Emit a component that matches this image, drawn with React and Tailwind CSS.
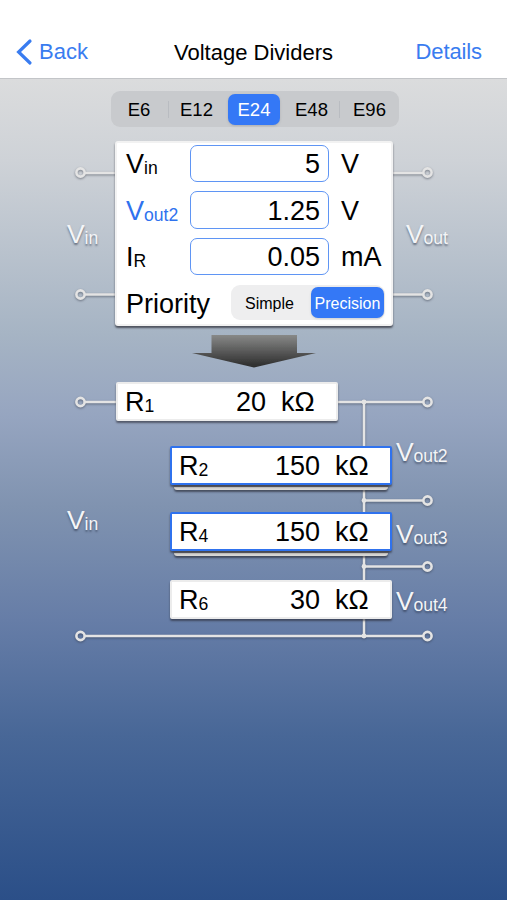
import clsx from "clsx";

const SERIES = [
  { label: "E6", className: "pr-[3px]", divider: true },
  { label: "E12", className: "pr-[4px]" },
  { label: "E24", className: "rounded-[7px] bg-[#3478f6] text-white shadow-sm" },
  { label: "E48", className: "pl-[4px]", divider: true },
  { label: "E96", className: "pl-[2px]" },
];

const INPUTS = [
  { name: "V", sub: "in", value: "5", unit: "V" },
  { name: "V", sub: "out2", value: "1.25", unit: "V", active: true },
  { name: "I", sub: "R", value: "0.05", unit: "mA" },
];

function Symbol({ name, sub, className }) {
  return (
    <span className={clsx("whitespace-nowrap", className)}>
      {name}
      <span className="relative top-px text-[17.6px]">{sub}</span>
    </span>
  );
}

function CanvasLabel({ name, sub, className }) {
  return (
    <Symbol
      name={name}
      sub={sub}
      className={clsx(
        "text-[26.5px] leading-[30px] tracking-[-0.1px] text-[#f4f5f7] [text-shadow:0_2px_2px_rgba(40,50,70,0.55)]",
        className
      )}
    />
  );
}

function Wires() {
  const dots = [
    [80.5, 172.5], [427.5, 172.5],
    [80.5, 294.5], [427.5, 294.5],
    [80.5, 402], [427.5, 402],
    [427.5, 500.5], [427.5, 566.5],
    [80.5, 636], [427.5, 636],
  ];
  return (
    <svg
      viewBox="0 79 507 821"
      className="absolute inset-0 h-[821px] w-[507px] drop-shadow-[0_1.5px_1px_rgba(40,45,60,0.5)]"
      fill="none"
      stroke="#e4e4e4"
      strokeWidth="2.5"
    >
      <path d="M85 173H117M392 173H423M85 294.5H117M392 294.5H423" />
      <path d="M85 402H117M337 402H423M364 400V638M364 500.5H423M364 566.5H423M85 636H423" />
      {dots.map(([x, y]) => (
        <circle key={`${x}-${y}`} cx={x} cy={y} r="4.1" strokeWidth="2.6" />
      ))}
      <g fill="#e4e4e4" stroke="none">
        <circle cx="364" cy="402" r="2.4" />
        <circle cx="364" cy="500.5" r="2.4" />
        <circle cx="364" cy="566.5" r="2.4" />
        <circle cx="364" cy="636" r="2.4" />
      </g>
    </svg>
  );
}

function Resistor({ sub, value, selected }) {
  return (
    <div className="relative h-[39px] w-[222px] shrink-0">
      {selected && (
        <div className="absolute inset-x-[4px] top-[36px] h-[8px] rounded-b-[3px] border-b-[3px] border-[#d9d8d6] bg-[#77767a] shadow-[0_2px_2px_rgba(30,30,40,0.6)]" />
      )}
      <div
        className={clsx(
          "relative flex h-full items-center rounded-[2px] border-2 bg-white pl-[7px] pt-[2px] text-[27px] leading-none text-black shadow-[0_2px_2px_rgba(40,40,50,0.6)]",
          selected ? "border-[#2f72ee]" : "border-[#ececec]"
        )}
      >
        <Symbol name="R" sub={sub} className="w-[53px]" />
        <span className="w-[88px] text-right">{value}</span>
        <span className="ml-[15px]">kΩ</span>
      </div>
    </div>
  );
}

function App() {
  return (
    <div className="flex h-[900px] w-[507px] flex-col overflow-hidden bg-white font-['Liberation_Sans',Arial,sans-serif] text-black">
      <header className="grid h-[79px] shrink-0 grid-cols-[1fr_auto_1fr] items-center border-b border-[#c3c5c8] px-[16px] pt-[26px] text-[22px] leading-[26px]">
        <button className="flex items-center text-[#397cf0]">
          <svg width="17" height="28" viewBox="0 0 17 28" fill="none" stroke="#397cf0" strokeWidth="3.2" strokeLinecap="round">
            <path d="M14 3L2.6 14L14 25" />
          </svg>
          <span className="ml-[6px]">Back</span>
        </button>
        <h1 className="pt-[2px]">Voltage Dividers</h1>
        <button className="pr-[9px] text-right tracking-[-0.1px] text-[#397cf0]">Details</button>
      </header>

      <main className="relative h-[821px] bg-[linear-gradient(180deg,#dbdcdd_0%,#ced2d7_10%,#a6b4c4_31%,#96a5c0_41%,#8093b0_52%,#667da7_66%,#486797_80%,#2b4f88_100%)]">
        <Wires />

        <div className="relative ml-[111px] mt-[12px] grid h-[36px] w-[288px] grid-cols-[56px_59px_52px_60px_57px] items-center rounded-[9px] bg-[#c8cacd] px-[2px] text-[18.5px]">
          {SERIES.map((s) => (
            <div key={s.label} className="flex h-[31px] items-center">
              <button className={clsx("h-full flex-1 pt-px", s.className)}>{s.label}</button>
              {s.divider && <span className="h-[17px] w-px bg-[#b9bcc1]" />}
            </div>
          ))}
        </div>

        <section className="relative mt-[14px] flex">
          <div className="w-[115px] shrink-0 pl-[67px] pt-[78px]">
            <CanvasLabel name="V" sub="in" />
          </div>
          <div className="h-[185px] w-[278px] shrink-0 rounded-[3px] border-2 border-[#f2f2f2] bg-white pl-[9px] pt-[2px] text-[27px] shadow-[0_2px_2px_rgba(40,40,50,0.7)]">
            <div className="flex flex-col gap-[9px]">
              {INPUTS.map((row) => (
                <div key={row.name + row.sub} className="flex h-[37.4px] items-center leading-none">
                  <Symbol name={row.name} sub={row.sub} className={clsx("w-[64px] pt-[2px]", row.active && "text-[#2f72ee]")} />
                  <div className="flex h-full w-[139px] items-center justify-end rounded-[7px] border-[1.5px] border-[#5f95f4] pr-[8px] pt-[2px]">
                    {row.value}
                  </div>
                  <span className="ml-[12px] pt-[2px]">{row.unit}</span>
                </div>
              ))}
            </div>
            <div className="mt-[10px] flex h-[35px] items-center leading-none">
              <span className="w-[105px] pt-[3px]">Priority</span>
              <div className="flex h-full w-[154px] items-center rounded-[9px] bg-[#eeeeef] text-[16px]">
                <button className="w-[80px] pr-[3px] pt-[3px]">Simple</button>
                <button className="h-[31px] w-[73px] rounded-[7px] bg-[#3478f6] pt-[2px] text-white shadow-sm">Precision</button>
              </div>
            </div>
          </div>
          <div className="pl-[13px] pt-[78px]">
            <CanvasLabel name="V" sub="out" />
          </div>
        </section>

        <svg className="relative ml-[190px] mt-[8px] block" width="128" height="34" viewBox="190 334 128 34">
          <defs>
            <linearGradient id="arrow" x1="0" y1="0" x2="0" y2="1">
              <stop offset="0" stopColor="#888988" />
              <stop offset="1" stopColor="#2a2a2a" />
            </linearGradient>
            <filter id="soft" x="-5%" y="-10%" width="110%" height="120%">
              <feGaussianBlur stdDeviation="0.6" />
            </filter>
          </defs>
          <path filter="url(#soft)" fill="url(#arrow)" d="M211.5 335H297V353H316L254 367.5L192 353H211.5Z" />
        </svg>

        <section className="relative mt-[14px] flex">
          <div className="w-[116px] shrink-0 pl-[67px] pt-[123px]">
            <CanvasLabel name="V" sub="in" />
          </div>
          <div className="flex flex-col">
            <Resistor sub="1" value="20" />
            <div className="ml-[54px] mt-[25px] flex flex-col">
              <div className="flex h-[39px] items-center">
                <Resistor sub="2" value="150" selected />
                <CanvasLabel name="V" sub="out2" className="ml-[4px] -mt-[24px]" />
              </div>
              <div className="mt-[27px] flex h-[39px] items-center">
                <Resistor sub="4" value="150" selected />
                <CanvasLabel name="V" sub="out3" className="ml-[4px] mt-[8px]" />
              </div>
              <div className="mt-[29px] flex h-[39px] items-center">
                <Resistor sub="6" value="30" />
                <CanvasLabel name="V" sub="out4" className="ml-[4px] mt-[6px]" />
              </div>
            </div>
          </div>
        </section>
      </main>
    </div>
  );
}

export default App;
